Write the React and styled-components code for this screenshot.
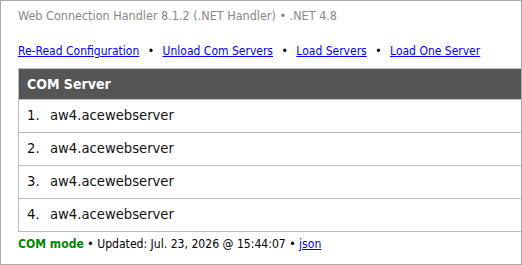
import React from 'react'
import styled, { createGlobalStyle } from 'styled-components'

const GlobalStyle = createGlobalStyle`
  html, body { margin: 0; padding: 0; background: #fff; }
  body { font-family: "DejaVu Sans Condensed", "DejaVu Sans", Verdana, sans-serif; }
`

const servers = ['aw4.acewebserver', 'aw4.acewebserver', 'aw4.acewebserver', 'aw4.acewebserver']
const links = ['Re-Read Configuration', 'Unload Com Servers', 'Load Servers', 'Load One Server']

const App = () => {
  return (
    <>
      <GlobalStyle />
      <Frame>
        <Version>Web Connection Handler 8.1.2 (.NET Handler) • .NET 4.8</Version>
        <LinkBar>
          {links.map((l, i) => (
            <React.Fragment key={l}>
              {i > 0 && <Bullet>•</Bullet>}
              <StyledLink href="#">{l}</StyledLink>
            </React.Fragment>
          ))}
        </LinkBar>
        <Table>
          <HeadRow>COM Server</HeadRow>
          {servers.map((s, i) => (
            <Row key={i}>
              <Num>{i + 1}.</Num>
              {s}
            </Row>
          ))}
        </Table>
        <Footer>
          <Mode>COM mode</Mode> • Updated: Jul. 23, 2026 @ 15:44:07 • <SmallLink href="#">json</SmallLink>
        </Footer>
      </Frame>
    </>
  )
}

const Frame = styled.div`
  box-sizing: border-box;
  width: 522px;
  height: 265px;
  border: 1px solid #aaa;
  padding: 0 0 0 17px;
  display: flex;
  flex-direction: column;
`

const Version = styled.div`
  color: #888;
  font-size: 12.5px;
  height: 16px;
  line-height: 16px;
  margin-top: 7px;
`

const LinkBar = styled.div`
  display: flex;
  align-items: center;
  font-size: 12px;
  height: 16px;
  line-height: 16px;
  margin-top: 19px;
`

const StyledLink = styled.a`
  color: #00e;
  text-decoration: underline;
`

const Bullet = styled.span`
  color: #000;
  margin: 0 8.5px;
`

const Table = styled.div`
  margin-top: 9px;
  border: 1px solid #bbb;
  border-right: none;
  display: flex;
  flex-direction: column;
`

const HeadRow = styled.div`
  background: #555;
  color: #fff;
  font-weight: bold;
  font-size: 14px;
  height: 30px;
  line-height: 30px;
  padding-left: 8px;
  border-bottom: 1px solid #bbb;
`

const Row = styled.div`
  font-family: "DejaVu Sans", Verdana, sans-serif;
  font-size: 13.2px;
  color: #111;
  height: 32px;
  line-height: 32px;
  padding-left: 8px;
  border-bottom: 1px solid #bbb;
  &:last-child { border-bottom: none; }
`

const Num = styled.span`
  display: inline-block;
  width: 23px;
`

const Footer = styled.div`
  font-size: 12.1px;
  color: #000;
  margin-top: 4px;
  height: 16px;
  line-height: 16px;
`

const Mode = styled.span`
  color: #080;
  font-weight: bold;
`

const SmallLink = styled.a`
  color: #00e;
  text-decoration: underline;
`

export default App
